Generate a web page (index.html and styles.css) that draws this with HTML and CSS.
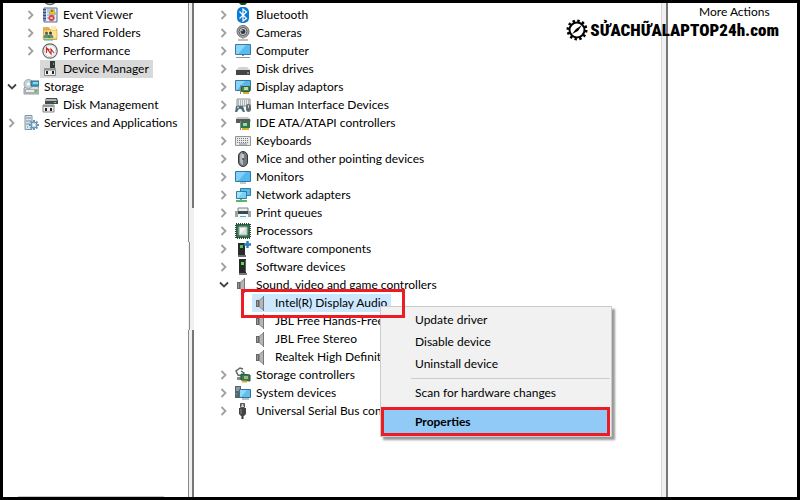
FILE: index.html
```
<!DOCTYPE html>
<html lang="en">
<head>
  <meta charset="UTF-8">
  <meta name="viewport" content="width=device-width, initial-scale=1.0">
  <title>Computer Management</title>
  <link rel="stylesheet" href="styles.css">
</head>
<body>
  <svg class="sprite" aria-hidden="true">
    <symbol id="right" viewBox="0 0 8 10"><path d="M1.5 1l4 4-4 4" fill="none" stroke="#a0a0a0" stroke-width="1.8"/></symbol>
    <symbol id="down" viewBox="0 0 10 8"><path d="M1 1.5l4 4 4-4" fill="none" stroke="#444" stroke-width="1.8"/></symbol>
    <symbol id="clock" viewBox="0 0 16 16"><circle cx="8" cy="8" r="6.5" fill="#dde4ea" stroke="#666" stroke-width="1.6"/></symbol>
    <symbol id="event" viewBox="0 0 16 16"><path d="M2 1h13v14H2z" fill="#e4edfa" stroke="#526a9c"/><path d="M1 2h3v12H1z" fill="#334b86"/><path d="M1 4h3M1 7h3M1 10h3M1 13h3" stroke="#c8d2e8"/><path d="M5 3h8M5 5h8M5 8h8M5 11h8" stroke="#7da0d5"/><path d="M10 1l4 6H7z" fill="#f5c929" stroke="#ad8a18" stroke-width=".5"/><path d="M10 3v2" stroke="#333"/><circle cx="9.5" cy="11" r="3" fill="#d93a35"/><path d="M8.300 9.800l2.400 2.400m0-2.400l-2.400 2.400" stroke="#fff"/></symbol>
    <symbol id="shared" viewBox="0 0 16 16"><path d="M1 2h6l1 2h7v11H1z" fill="#e4b24a"/><path d="M2 5h13v9H1z" fill="#ffe090" stroke="#c99a3c" stroke-width=".6"/><path d="M9 1h5v4H9z" fill="#ffe9ac"/><circle cx="4.500" cy="8" r="1.500" fill="#6c5140"/><circle cx="8.500" cy="8" r="1.500" fill="#443a35"/><path d="M2 13q0-4 3-3.500t2 3.500q0-4 2-3.500t2 3.500" fill="#4d9b83" stroke="#316b6a" stroke-width=".6"/><path d="M2 15h9" stroke="#35b7b2"/></symbol>
    <symbol id="performance" viewBox="0 0 16 16"><circle cx="8" cy="8" r="7.200" fill="#fff" stroke="#666" stroke-width="1.200"/><circle cx="8" cy="8" r="5.600" fill="none" stroke="#bbb" stroke-width=".6"/><path d="M4.500 10V5l4.500 6V6l3 4M4.500 5l3 2" fill="none" stroke="#c52d2b" stroke-width="1.200"/></symbol>
    <symbol id="device" viewBox="0 0 16 16"><path d="M8 0h5v8H8z" fill="#303735"/><path d="M11 2h1v2h-1z" fill="#56a654"/><path d="M2 7h12v2H2z" fill="#949a9b"/><path d="M2.500 9h11v5.500h-11z" fill="#f1f1ef" stroke="#858989"/><path d="M4 10h2v3H4zM10 10h2v3h-2z" fill="#252525"/></symbol>
    <symbol id="storage" viewBox="0 0 16 16"><path d="M1 9l2-2h11l2 2v6H1z" fill="#d7dddd" stroke="#687376" stroke-width=".7"/><path d="M1 10h15v5H1z" fill="#a7afb2"/><path d="M3 11h8v2H3z" fill="#eee"/><path d="M12 11h2v2h-2z" fill="#46cf4b"/><circle cx="5.500" cy="5" r="4.500" fill="#c6d5d6" stroke="#81908f" stroke-width=".7"/><circle cx="5.500" cy="5" r="1.500" fill="#fff"/><path d="M8 2h8v5H8z" fill="#32a5d9" stroke="#46636c"/><path d="M10 3h5v2h-5z" fill="#83d9f4"/></symbol>
    <symbol id="disk-manager" viewBox="0 0 16 16"><path d="M4 1h11l1 3v3H3V4z" fill="#444b4c"/><path d="M4 2h10l1 2H3z" fill="#aeb6b7"/><path d="M12 5h2v1h-2z" fill="#5be559"/><path d="M1 8h11v7H1z" fill="#eee" stroke="#858585"/><path d="M1 8h11v2H1z" fill="#999"/><path d="M3 11h2v3H3zM8 11h2v3H8z" fill="#222"/></symbol>
    <symbol id="services" viewBox="0 0 16 16"><path d="M2 .5h7v14H2z" fill="#d9e4ec" stroke="#8195a3"/><path d="M3 3h5M3 6h5M3 9h4" stroke="#748d9c"/><path d="M4 12h1" stroke="#30a85c"/><path d="M11 5v10M6 10h10M7.500 6.500l7 7m0-7l-7 7" stroke="#6b99bc" stroke-width="2"/><circle cx="11" cy="10" r="3" fill="#bed7e9" stroke="#648aaa"/><circle cx="11" cy="10" r="1.200" fill="#fff"/></symbol>
    <symbol id="component-top" viewBox="0 0 16 16"><path d="M4 1h8v12l-2 2H6l-2-2z" fill="#1b4c29"/><path d="M6 3h4v10H6z" fill="#409653"/></symbol>
    <symbol id="bluetooth" viewBox="0 0 16 16"><rect x="2" width="12" height="16" rx="5" fill="#087bd5"/><path d="M4.500 4.500l7 7L8 14V2l3.500 3-7 6.500" fill="none" stroke="#fff" stroke-width="1.200"/></symbol>
    <symbol id="camera" viewBox="0 0 16 16"><circle cx="8" cy="6.500" r="6" fill="#aaa" stroke="#6c6c6c"/><circle cx="8" cy="6.500" r="4" fill="#e4e4e4" stroke="#555"/><circle cx="8" cy="6.500" r="2.500" fill="#343941"/><circle cx="7" cy="5.500" r=".8" fill="#bbcee1"/><path d="M8 12v2M3 15h10" stroke="#aaa" stroke-width="1.500"/></symbol>
    <symbol id="computer" viewBox="0 0 16 16"><path d="M.5 1.500h15v10H.5z" fill="#58bcf2" stroke="#40779a"/><path d="M1 2h10L3 11H1z" fill="#8bd5fb"/><path d="M7 12h2v1H7z" fill="#7b8b94"/><path d="M1 14.500h14" stroke="#8799a5"/></symbol>
    <symbol id="disk" viewBox="0 0 16 16"><path d="M4 6h8l3 3H1z" fill="#d2d2d2"/><path d="M1 9h14v5H1z" fill="#464646"/><path d="M12 12h2" stroke="#b5d4b7"/></symbol>
    <symbol id="display" viewBox="0 0 16 16"><path d="M.5 1.500h15v10H.5z" fill="#57b8eb" stroke="#3e7795"/><path d="M1 2h9L2 11H1z" fill="#8bd5fa"/><path d="M6.500 7.500h8v5h-8z" fill="#408752" stroke="#2d5b38"/><path d="M9 8h4v3H9z" fill="#c8d79e"/><path d="M8 14h6" stroke="#d6ac38" stroke-width="2"/><path d="M5.500 6v9" stroke="#798b91"/></symbol>
    <symbol id="hid" viewBox="0 0 16 16"><path d="M2 2h13v7H2z" fill="#eceff0" stroke="#8a9093"/><path d="M3 4h12M3 6h12M3 8h12" stroke="#777" stroke-dasharray="1 1"/><path d="M0 15l1-6h7l2 6H8l-2-3H4l-2 3z" fill="#526d7c"/><circle cx="3" cy="10.500" r="1" fill="#add7ed"/><rect x="11" y="7" width="5" height="8" rx="2.400" fill="#626d75"/><path d="M13.500 8v3" stroke="#ccc"/></symbol>
    <symbol id="ide" viewBox="0 0 16 16"><path d="M2 2h11l3 3v2H1V4z" fill="#c4c8c6"/><path d="M1 4h14v4H1z" fill="#555b58"/><path d="M6 7h9v6H6z" fill="#287a49"/><path d="M8 8h4v3H8z" fill="#b6c9aa"/><path d="M7 14h7" stroke="#d7ad2a" stroke-width="2"/><path d="M5.500 6v9" stroke="#7e8c85"/></symbol>
    <symbol id="keyboard" viewBox="0 0 16 16"><path d="M.5 3.500h15v9H.5z" fill="#e8eaeb" stroke="#929698"/><path d="M2 5.500h12M2 7.500h12M2 9.500h12" stroke="#767b7e" stroke-dasharray="1 1"/><path d="M4 11h8" stroke="#858a8c"/></symbol>
    <symbol id="mouse" viewBox="0 0 16 16"><rect x="3.500" y=".5" width="9" height="15" rx="4.500" fill="#737b80" stroke="#30383e"/><path d="M5 4q1-3 3-3v13q-3-1-3-4z" fill="#b1b7ba"/><path d="M8 1v8" stroke="#333"/><path d="M8 3v4" stroke="#eee" stroke-width="1.500"/></symbol>
    <symbol id="monitor" viewBox="0 0 16 16"><path d="M.5 2.500h15v10H.5z" fill="#55b9f0" stroke="#32789e"/><path d="M1 3h10l-8 9H1z" fill="#83d0f8"/><path d="M5 14h6" stroke="#81929c"/></symbol>
    <symbol id="network" viewBox="0 0 16 16"><path d="M5.500 1.500h10v7h-10z" fill="#55bcec" stroke="#357c9f"/><path d="M1.500 4.500h10v7h-10z" fill="#7acff5" stroke="#357c9f"/><path d="M2 5h6l-5 6H2z" fill="#a7e1fb"/><path d="M6 12v3M1 14h11" stroke="#54b96a" stroke-width="2"/></symbol>
    <symbol id="printer" viewBox="0 0 16 16"><path d="M3 3h10v4H3z" fill="#e9eef0" stroke="#788286"/><path d="M1 6h14v6H1z" fill="#3f484b"/><path d="M0 6h3v6H0zM13 6h3v6h-3z" fill="#9da6aa"/><path d="M3 9h10v5H3z" fill="#f4f7f8"/><path d="M5 11.500h6" stroke="#46b1cd"/><path d="M1 8h1" stroke="#46d352"/></symbol>
    <symbol id="processor" viewBox="0 0 16 16"><path d="M1 1h14v14H1z" fill="#366f4f" stroke="#274936" stroke-width="2" stroke-dasharray="1 1"/><path d="M4 4h8v8H4z" fill="#d7dedc" stroke="#a4b9ae"/><path d="M5 5h6l-6 6z" fill="#f3f4f3"/></symbol>
    <symbol id="component" viewBox="0 0 16 16"><path d="M3 2h7v12H3z" fill="#252c2b"/><path d="M5 4h3v3H5z" fill="#55c365"/><path d="M3 14h8v2H3z" fill="#69716f"/><path d="M12.500 0v7M9 3.500h7" stroke="#2b80b8" stroke-width="2.400"/></symbol>
    <symbol id="software" viewBox="0 0 16 16"><path d="M4 0h7v14H4z" fill="#252b29"/><path d="M6 3h3v3H6z" fill="#65d64c"/><path d="M10.500 1v12" stroke="#5b6662"/><path d="M4 14h8v2H4z" fill="#747c79"/></symbol>
    <symbol id="speaker" viewBox="0 0 16 16"><path d="M2 5h3v7H2z" fill="#666"/><path d="M5 5l5-4v15l-5-4z" fill="#8d8d8d"/><path d="M6 5l3-2v11l-3-2z" fill="#b5b5b5"/><path d="M9.500 1v15" stroke="#777"/><path d="M3.500 6v5" stroke="#999"/></symbol>
    <symbol id="controller" viewBox="0 0 16 16"><path d="M8 2L5 1 1 4l2 4 4 1 2-3-3-2" fill="none" stroke="#5c6664" stroke-width="1.500"/><path d="M2 10h5v3H2z" fill="#858b89"/><path d="M6 7l9 1v6l-9-1z" fill="#327f51" stroke="#25513a"/><path d="M9 9h4v3H9z" fill="#a0b980"/><path d="M7 14.500h5" stroke="#d4aa2e" stroke-width="2"/></symbol>
    <symbol id="system" viewBox="0 0 16 16"><path d="M0 1h6v12H0z" fill="#59656b"/><path d="M1 3h4M1 5h4" stroke="#c2cacf"/><path d="M1 9h1" stroke="#64de64"/><path d="M4.500 4.500h11v8h-11z" fill="#61bff0" stroke="#397290"/><path d="M5 5h7l-6 7H5z" fill="#91d8f8"/><path d="M7 14h7" stroke="#75858d"/></symbol>
    <symbol id="usb" viewBox="0 0 16 16"><path d="M5.500.5h4v4h-4z" fill="#d1d1d1" stroke="#555"/><path d="M6 2h1M8 2h1" stroke="#333"/><path d="M4 5h7v6l-2 2H6l-2-2z" fill="#444"/><path d="M6 6v5" stroke="#888"/><path d="M7.500 13v3" stroke="#333" stroke-width="2"/></symbol>
  </svg>

  <div class="console">
    <nav class="tree side" aria-label="Console tree">
      <div class="row level2 clipped"><svg class="icon"><use href="#clock"/></svg></div>
      <div class="row level2"><svg class="arrow"><use href="#right"/></svg><svg class="icon"><use href="#event"/></svg><span class="label">Event Viewer</span></div>
      <div class="row level2"><svg class="arrow"><use href="#right"/></svg><svg class="icon"><use href="#shared"/></svg><span class="label">Shared Folders</span></div>
      <div class="row level2"><svg class="arrow"><use href="#right"/></svg><svg class="icon"><use href="#performance"/></svg><span class="label">Performance</span></div>
      <div class="row level2 leaf"><span class="current"><svg class="icon"><use href="#device"/></svg><span class="label">Device Manager</span></span></div>
      <div class="row"><svg class="arrow"><use href="#down"/></svg><svg class="icon"><use href="#storage"/></svg><span class="label">Storage</span></div>
      <div class="row level2 leaf"><svg class="icon"><use href="#disk-manager"/></svg><span class="label">Disk Management</span></div>
      <div class="row"><svg class="arrow"><use href="#right"/></svg><svg class="icon"><use href="#services"/></svg><span class="label">Services and Applications</span></div>
    </nav>
    <div class="splitter split-left"><i class="upper"></i><i class="gap"></i><i class="middle"></i><i class="lower"></i></div>
    <main class="tree devices">
      <div class="row clipped"><svg class="icon"><use href="#component-top"/></svg></div>
      <div class="row"><svg class="arrow"><use href="#right"/></svg><svg class="icon"><use href="#bluetooth"/></svg><span class="label">Bluetooth</span></div>
      <div class="row"><svg class="arrow"><use href="#right"/></svg><svg class="icon"><use href="#camera"/></svg><span class="label">Cameras</span></div>
      <div class="row"><svg class="arrow"><use href="#right"/></svg><svg class="icon"><use href="#computer"/></svg><span class="label">Computer</span></div>
      <div class="row"><svg class="arrow"><use href="#right"/></svg><svg class="icon"><use href="#disk"/></svg><span class="label">Disk drives</span></div>
      <div class="row"><svg class="arrow"><use href="#right"/></svg><svg class="icon"><use href="#display"/></svg><span class="label">Display adaptors</span></div>
      <div class="row"><svg class="arrow"><use href="#right"/></svg><svg class="icon"><use href="#hid"/></svg><span class="label">Human Interface Devices</span></div>
      <div class="row"><svg class="arrow"><use href="#right"/></svg><svg class="icon"><use href="#ide"/></svg><span class="label">IDE ATA/ATAPI controllers</span></div>
      <div class="row"><svg class="arrow"><use href="#right"/></svg><svg class="icon"><use href="#keyboard"/></svg><span class="label">Keyboards</span></div>
      <div class="row"><svg class="arrow"><use href="#right"/></svg><svg class="icon"><use href="#mouse"/></svg><span class="label">Mice and other pointing devices</span></div>
      <div class="row"><svg class="arrow"><use href="#right"/></svg><svg class="icon"><use href="#monitor"/></svg><span class="label">Monitors</span></div>
      <div class="row"><svg class="arrow"><use href="#right"/></svg><svg class="icon"><use href="#network"/></svg><span class="label">Network adapters</span></div>
      <div class="row"><svg class="arrow"><use href="#right"/></svg><svg class="icon"><use href="#printer"/></svg><span class="label">Print queues</span></div>
      <div class="row"><svg class="arrow"><use href="#right"/></svg><svg class="icon"><use href="#processor"/></svg><span class="label">Processors</span></div>
      <div class="row"><svg class="arrow"><use href="#right"/></svg><svg class="icon"><use href="#component"/></svg><span class="label">Software components</span></div>
      <div class="row"><svg class="arrow"><use href="#right"/></svg><svg class="icon"><use href="#software"/></svg><span class="label">Software devices</span></div>
      <div class="row"><svg class="arrow"><use href="#down"/></svg><svg class="icon"><use href="#speaker"/></svg><span class="label">Sound, video and game controllers</span></div>
      <div class="row level2 leaf target">
        <span class="current"><svg class="icon"><use href="#speaker"/></svg><span class="label">Intel(R) Display Audio</span></span>
        <div class="marker"></div>
        <div class="menu" role="menu">
          <button type="button" role="menuitem">Update driver</button>
          <button type="button" role="menuitem">Disable device</button>
          <button type="button" role="menuitem">Uninstall device</button>
          <hr>
          <button type="button" role="menuitem">Scan for hardware changes</button>
          <button type="button" role="menuitem" class="properties">Properties</button>
        </div>
      </div>
      <div class="row level2 leaf"><svg class="icon"><use href="#speaker"/></svg><span class="label">JBL Free Hands-Free</span></div>
      <div class="row level2 leaf"><svg class="icon"><use href="#speaker"/></svg><span class="label">JBL Free Stereo</span></div>
      <div class="row level2 leaf"><svg class="icon"><use href="#speaker"/></svg><span class="label">Realtek High Definit</span></div>
      <div class="row"><svg class="arrow"><use href="#right"/></svg><svg class="icon"><use href="#controller"/></svg><span class="label">Storage controllers</span></div>
      <div class="row"><svg class="arrow"><use href="#right"/></svg><svg class="icon"><use href="#system"/></svg><span class="label">System devices</span></div>
      <div class="row"><svg class="arrow"><use href="#right"/></svg><svg class="icon"><use href="#usb"/></svg><span class="label">Universal Serial Bus con</span></div>
    </main>
    <div class="splitter split-right"></div>
    <aside class="actions">More Actions</aside>
    <div class="brand">
      <svg class="gear" viewBox="0 0 22 22"><circle cx="11" cy="11" r="9" fill="none" stroke="#000" stroke-width="3" stroke-dasharray="2.400 2.312"/><circle cx="11" cy="11" r="7.500" fill="none" stroke="#000" stroke-width="2"/><path d="M6 15l4-5 6-4-4 6z"/></svg>
      <span>SỬACHỮALAPTOP24h.com</span>
    </div>
  </div>
</body>
</html>
```
FILE: styles.css
```
* {
  box-sizing: border-box;
}
body {
  margin: 0;
  background-color: #fff;
  color: #000;
  font-family: "Segoe UI", Lato, "Open Sans", sans-serif;
  font-size: 12px;
  line-height: 18px;
}
.sprite {
  display: none;
}
.console {
  position: relative;
  display: grid;
  grid-template-columns: 185px 6px 1fr 7px 129px;
  min-height: 100vh;
  border: 3px solid #000;
}
.tree {
  display: flex;
  flex-direction: column;
  min-width: 0;
  white-space: nowrap;
}
.side {
  padding-left: 4px;
}
.side::after {
  content: "";
  width: 146px;
  height: 1px;
  margin: auto 0 0 11px;
  background-color: #c8c8c8;
}
.devices {
  padding-left: 25px;
}
.row {
  display: flex;
  align-items: center;
  height: 18px;
}
.level2 {
  padding-left: 19px;
}
.clipped {
  height: 3px;
  overflow: hidden;
  align-items: flex-end;
}
.icon {
  flex: none;
  width: 16px;
  height: 16px;
  margin-right: 5px;
}
.arrow {
  flex: none;
  width: 10px;
  height: 10px;
  margin-right: 6px;
}
.leaf .icon,
.clipped .icon {
  margin-left: 16px;
}
.current {
  display: flex;
  align-items: center;
  height: 18px;
  margin-left: 14px;
  padding: 0 4px 0 2px;
  background-color: #d9d9d9;
}
.leaf .current .icon {
  margin-left: 0;
}
.splitter {
  background-color: #f0f0f0;
}
.split-left {
  display: grid;
  grid-template-rows: 205px 34px 88px 1fr;
}
.upper,
.lower {
  border-left: 1px solid #888;
  border-right: 2px solid #777;
}
.gap {
  border-left: 1px solid #888;
}
.middle {
  margin-left: 1px;
  border-left: 1px solid #888;
}
.split-right {
  border-left: 1px solid #d5d5d5;
  border-right: 2px solid #777;
}
.actions {
  padding-left: 31px;
}
.target {
  position: relative;
}
.target .current {
  background-color: #cce8ff;
}
.marker {
  position: absolute;
  z-index: 2;
  left: 22px;
  top: -5px;
  width: 164px;
  height: 29px;
  border: 3px solid #ed1c24;
}
.menu {
  position: absolute;
  z-index: 1;
  left: 161px;
  top: 12px;
  width: 232px;
  padding: 2px 1px 0 0;
  background-color: #f1f1f1;
  border: 1px solid #ccc;
  box-shadow: 3px 3px 2px #999;
}
.menu button {
  display: block;
  width: 100%;
  height: 22px;
  padding: 0 0 0 34px;
  border: 0;
  background: none;
  color: #000;
  font: inherit;
  text-align: left;
}
.menu hr {
  margin: 3px 0 3px 30px;
  border: 0;
  border-top: 1px solid #ccc;
}
.menu .properties {
  height: 29px;
  margin-top: 3px;
  padding-left: 31px;
  border: 3px solid #ed1c24;
  background-color: #91c9f7;
  font-weight: bold;
}
.brand {
  position: absolute;
  top: 16px;
  right: 18px;
  display: flex;
  align-items: center;
  gap: 2px;
  color: #000;
  font-family: Impact, "Roboto Condensed", Roboto, sans-serif;
  font-size: 17px;
  font-weight: 900;
}
.gear {
  width: 22px;
  height: 22px;
}
```
